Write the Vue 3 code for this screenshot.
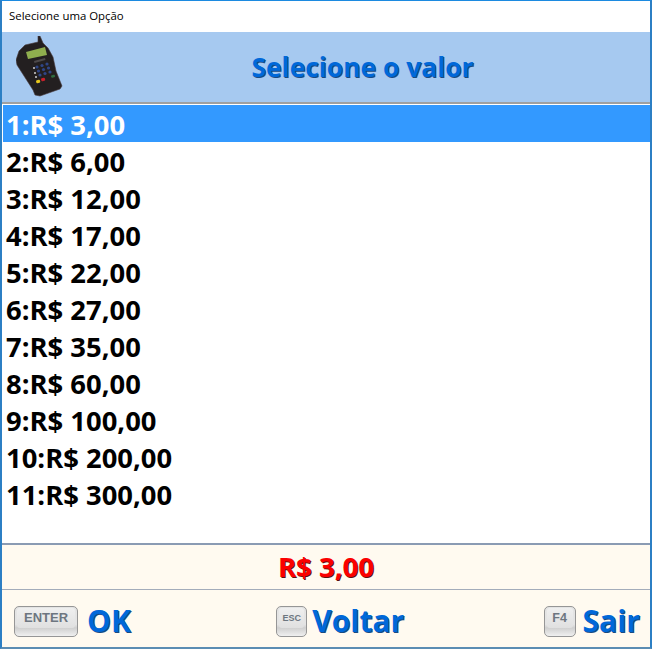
<script setup>
const items = ['R$ 3,00','R$ 6,00','R$ 12,00','R$ 17,00','R$ 22,00','R$ 27,00','R$ 35,00','R$ 60,00','R$ 100,00','R$ 200,00','R$ 300,00']
const keys = []
for (let r = 0; r < 3; r++) for (let c = 0; c < 3; c++) keys.push({ x: 21 + c * 5 + r * 1.5, y: 31 - c * 1.5 + r * 4 })
</script>

<template>
  <div class="window">
    <div class="titlebar">Selecione uma Opção</div>
    <header class="head">
      <svg class="pos" width="47" height="62" viewBox="0 0 47 62">
        <path d="M22 0l2 0 3 7 5 5 5 9 3 14 6 15-2 3-20 7-5-1-2-5-16-25-1-5 3-9 6-6 13-3z" fill="#231f20" stroke="#4a3a3c" stroke-width=".6"/>
        <path d="M10 16l19-5 2 8-19 4z" fill="#8fae4e"/>
        <path d="M18 25l11-3 .5 2-11 3z" fill="#4d494a"/>
        <g fill="#2f4688">
          <circle v-for="(k, i) in keys" :key="i" :cx="k.x" :cy="k.y" r="1.6"/>
        </g>
        <circle cx="18" cy="32" r="1" fill="#cfcfcf"/><circle cx="19" cy="37" r="1" fill="#cfcfcf"/><circle cx="20" cy="41" r="1" fill="#cfcfcf"/>
        <rect x="20" y="44" width="4" height="3" rx="1" fill="#e8c81d" transform="rotate(-15 22 45)"/>
        <rect x="25" y="42" width="4" height="3" rx="1" fill="#c8202c" transform="rotate(-15 27 43)"/>
        <rect x="35" y="39" width="4" height="2.5" rx="1" fill="#2f6b3f" transform="rotate(-15 37 40)"/>
      </svg>
      <h1 class="heading">Selecione o valor</h1>
    </header>
    <ul class="list">
      <li v-for="(item, i) in items" :key="i" class="row" :class="{ selected: i === 0 }">{{ i + 1 }}:{{ item }}</li>
    </ul>
    <div class="total">R$ 3,00</div>
    <footer class="actions">
      <div class="action first">
        <span class="key wide"><span class="cap">ENTER</span></span><span class="label">OK</span>
      </div>
      <div class="action middle">
        <span class="key small"><span class="cap">ESC</span></span><span class="label">Voltar</span>
      </div>
      <div class="action last">
        <span class="key f4"><span class="cap">F4</span></span><span class="label">Sair</span>
      </div>
    </footer>
  </div>
</template>

<style>
html, body { margin: 0; background: #fff; }
</style>

<style scoped>
.window {
  box-sizing: border-box;
  width: 652px;
  height: 649px;
  display: flex;
  flex-direction: column;
  border: 2px solid #2c7fc4;
  border-top: 1px solid #1c8ae0;
  border-bottom-color: #5b8db3;
  font-family: "Open Sans", "Noto Sans", sans-serif;
  overflow: hidden;
}
.titlebar {
  height: 31px;
  box-sizing: border-box;
  padding: 7px 0 0 7px;
  font-size: 11.4px;
  line-height: 16px;
  color: #000;
  background: #fff;
  flex: none;
}
.head {
  height: 72px;
  box-sizing: border-box;
  background: #a6c9f0;
  border-bottom: 2px solid #a0a0a0;
  display: flex;
  align-items: center;
  flex: none;
}
.pos { margin: 0 0 0 14px; flex: none; }
.heading {
  margin: 0;
  flex: 1;
  padding-left: 12px;
  text-align: center;
  font-size: 26.4px;
  line-height: 36px;
  font-weight: 700;
  color: #0068d9;
  text-shadow: 1px 1px 0 #1a4a80;
}
.list {
  list-style: none;
  margin: 0;
  padding: 1px 0 0 1px;
  flex: 1;
  background: #fff;
  font-size: 27.4px;
  font-weight: 700;
  color: #000;
}
.row {
  height: 37px;
  line-height: 39px;
  padding-left: 3px;
  white-space: nowrap;
}
.selected { background: #3399ff; color: #fff; }
.total {
  height: 47px;
  box-sizing: border-box;
  flex: none;
  background: #fffaf0;
  border-top: 2px solid #8a9bb3;
  border-bottom: 1px solid #a3acba;
  text-align: center;
  font-size: 27.5px;
  line-height: 43px;
  font-weight: 700;
  color: #fb0000;
  text-shadow: 1px 1px 0 #5a1010;
}
.actions {
  height: 57px;
  box-sizing: border-box;
  flex: none;
  background: #fffaf0;
  display: flex;
  justify-content: space-between;
  align-items: center;
  padding: 5px 10px 0 12px;
}
.action { display: flex; align-items: center; gap: 9px; }
.middle { margin-left: 6px; gap: 5px; }
.last { gap: 7px; }
.key {
  box-sizing: border-box;
  height: 31px;
  display: block;
  padding: 1px 2px 0;
  border: 1px solid #969696;
  border-radius: 5px;
  background: linear-gradient(#e4e4e4 0 60%, #cfcfcf 72%, #f0f0f0);
  font-family: "Liberation Sans", sans-serif;
  font-weight: 700;
}
.cap {
  display: block;
  height: 20px;
  line-height: 20px;
  text-align: center;
  border-radius: 3px;
  background: linear-gradient(#efefef, #e0e0e0);
  color: #6d7680;
}
.wide { width: 64px; }
.wide .cap { font-size: 13px; }
.small { width: 31px; }
.small .cap { font-size: 9px; }
.f4 { width: 32px; }
.f4 .cap { font-size: 12.5px; }
.label {
  font-family: "Open Sans", sans-serif;
  font-size: 30px;
  line-height: 40px;
  font-weight: 700;
  color: #0068d9;
  text-shadow: 1px 1px 0 #1a4a80;
}
</style>
